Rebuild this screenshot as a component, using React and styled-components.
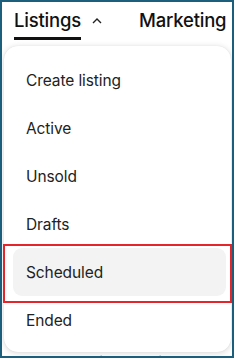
import React from 'react';
import styled, { createGlobalStyle } from "styled-components";

const items = ["Create listing", "Active", "Unsold", "Drafts", "Scheduled", "Ended"];

function App() {
    return (
        <Frame>
            <GlobalStyle />
            <Nav>
                <TabGroup>
                    <Tab active>Listings</Tab>
                    <Chevron viewBox="0 0 10 6">
                        <polyline points="1,5.5 5,1.5 9,5.5" />
                    </Chevron>
                </TabGroup>
                <Tab>Marketing</Tab>
            </Nav>
            <Behind>Share ideas with buyers</Behind>
            <Menu>
                {items.map((label) => (
                    <Item key={label} selected={label === "Scheduled"}>{label}</Item>
                ))}
            </Menu>
            <Annotation />
        </Frame>
    )
}

const GlobalStyle = createGlobalStyle`
    body {
        margin: 0;
        font-family: Inter, "Noto Sans", sans-serif;
        color: #222;
        background: #fff;
    }
`;

const Frame = styled.div`
    position: relative;
    width: 234px;
    height: 358px;
    box-sizing: border-box;
    border: 2px solid #1b5f7d;
    overflow: hidden;
    background: #fff;
`;

const Nav = styled.div`
    display: flex;
    align-items: flex-start;
    gap: 37px;
    padding: 6px 0 0 12px;
    white-space: nowrap;
`;

const TabGroup = styled.div`
    display: flex;
    align-items: flex-start;
    gap: 11px;
`;

const Tab = styled.div`
    font-size: 18.5px;
    font-weight: 500;
    letter-spacing: -0.2px;
    color: #111;
    line-height: 24px;
    padding-bottom: 5px;
    border-bottom: 3px solid ${(p) => (p.active ? "#111" : "transparent")};
`;

const Chevron = styled.svg`
    width: 10px;
    height: 7px;
    fill: none;
    stroke: #222;
    stroke-width: 1.4;
    margin-top: 9px;
`;

const Behind = styled.div`
    margin: 312px 0 0 48px;
    font-size: 16px;
    font-weight: 600;
    color: #222;
    white-space: nowrap;
`;

const Menu = styled.div`
    position: absolute;
    top: 44px;
    left: 2px;
    width: 227px;
    height: 306px;
    box-sizing: border-box;
    padding-top: 10px;
    background: #fff;
    border-radius: 14px;
    box-shadow: 0 1px 6px rgba(0, 0, 0, 0.16), 0 0 1px rgba(0, 0, 0, 0.1);
`;

const Item = styled.div`
    display: flex;
    align-items: center;
    height: 48px;
    margin: 0 5px 0 9px;
    padding-left: 13px;
    border-radius: 9px;
    font-size: 15.5px;
    letter-spacing: -0.1px;
    color: #222;
    background: ${(p) => (p.selected ? "#f3f3f3" : "transparent")};
`;

const Annotation = styled.div`
    position: absolute;
    top: 242px;
    left: 1px;
    width: 229px;
    height: 59px;
    box-sizing: border-box;
    border: 2px solid #e3262b;
    pointer-events: none;
`;

export default App;
